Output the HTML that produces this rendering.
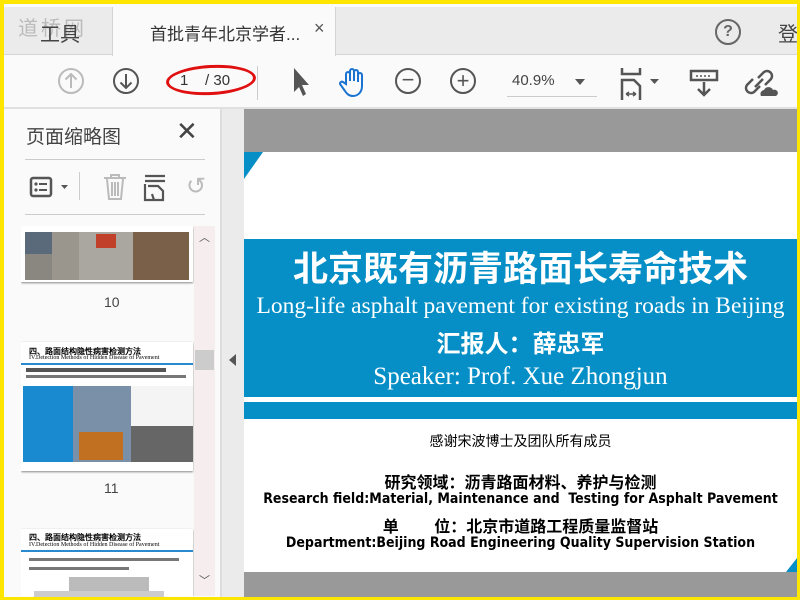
<!DOCTYPE html>
<html><head><meta charset="utf-8"><style>
*{margin:0;padding:0;box-sizing:border-box}
body{width:800px;height:600px;overflow:hidden;background:#ffe600;position:relative;font-family:"Liberation Sans","Noto Sans CJK SC",sans-serif}
.a{position:absolute}
.cn{font-family:"Liberation Sans","Noto Sans CJK SC",sans-serif}
.serif{font-family:"Liberation Serif","Noto Serif CJK SC",serif}
</style></head><body>
<div class="a" style="left:4px;top:4px;width:793px;height:593px;background:#fafafa;overflow:hidden">
 <div class="a" style="left:0;top:3px;width:793px;height:48px;background:#ebebeb;border-bottom:1px solid #d4d4d4"></div>
 <div class="a" style="left:108px;top:3px;width:224px;height:49px;background:#fafafa;border-left:1px solid #d4d4d4;border-right:1px solid #d4d4d4"></div>
 <div class="a" style="left:14px;top:8px;font-size:20px;color:#bbb;letter-spacing:3px">道桥网</div>
 <div class="a" style="left:36px;top:14px;font-size:20px;color:#444">工具</div>
 <div class="a" style="left:146px;top:16px;font-size:17px;color:#333">首批青年北京学者...</div>
 <div class="a" style="left:310px;top:14px;font-size:18px;color:#555">×</div>
 <div class="a" style="left:711px;top:15px;width:26px;height:26px;border:2px solid #666;border-radius:50%;text-align:center;font-size:16px;line-height:22px;color:#666;font-weight:bold">?</div>
 <div class="a" style="left:774px;top:14px;font-size:20px;color:#444">登</div>
 <div class="a" style="left:0;top:103px;width:793px;height:2px;background:#e0e0e0"></div>
 <svg class="a" style="left:54px;top:64px" width="28" height="28"><circle cx="13" cy="13" r="12" fill="none" stroke="#bbb" stroke-width="2"/><path d="M13 20V6M7.5 11.5L13 6l5.5 5.5" fill="none" stroke="#bbb" stroke-width="2"/></svg>
 <svg class="a" style="left:109px;top:64px" width="28" height="28"><circle cx="13" cy="13" r="12" fill="none" stroke="#555" stroke-width="2"/><path d="M13 6v14M7.5 14.5L13 20l5.5-5.5" fill="none" stroke="#555" stroke-width="2"/></svg>
 <div class="a" style="left:162px;top:61px;width:90px;height:30px;border:3px solid #e01010;border-radius:50%;transform:rotate(-3deg)"></div>
 <div class="a" style="left:176px;top:68px;font-size:15px;color:#333">1&nbsp;&nbsp;&nbsp;&nbsp;/ 30</div>
 <div class="a" style="left:253px;top:62px;width:1px;height:34px;background:#ccc"></div>
 <svg class="a" style="left:284px;top:62px" width="24" height="32"><path d="M6 2 L6 26 L11 21 L15 30 L18 28 L14 19 L21 19 Z" fill="#555"/></svg>
 <svg class="a" style="left:334px;top:62px" width="32" height="32"><path d="M8 18 V8 a2 2 0 0 1 4 0 V15 V5 a2 2 0 0 1 4 0 V15 V6 a2 2 0 0 1 4 0 V16 V9 a2 2 0 0 1 4 0 V20 c0 6 -4 10 -9 10 c-4 0 -6 -2 -8 -5 l-5 -7 a2 2 0 0 1 3 -2 Z" fill="none" stroke="#1a73d0" stroke-width="2"/></svg>
 <div class="a" style="left:391px;top:64px;width:26px;height:26px;border:2px solid #555;border-radius:50%;text-align:center;font-size:22px;line-height:20px;color:#555">−</div>
 <div class="a" style="left:446px;top:64px;width:26px;height:26px;border:2px solid #555;border-radius:50%;text-align:center;font-size:22px;line-height:21px;color:#555">+</div>
 <div class="a" style="left:508px;top:68px;font-size:15px;color:#444">40.9%</div>
 <div class="a" style="left:571px;top:75px;border:5px solid transparent;border-top:6px solid #555"></div>
 <div class="a" style="left:503px;top:92px;width:90px;height:1px;background:#ccc"></div>
 <svg class="a" style="left:616px;top:62px" width="40" height="36"><path d="M2 2 V8 H20 V2 M2 34 V14 H14 L20 20 V34" fill="none" stroke="#555" stroke-width="2.5"/><path d="M6 28 H16 M6 28 l3 -2 M6 28 l3 2 M16 28 l-3 -2 M16 28 l-3 2" stroke="#555" stroke-width="1.5"/><path d="M30 13 h9 l-4.5 5z" fill="#555"/></svg>
 <svg class="a" style="left:685px;top:65px" width="32" height="30"><rect x="2" y="2" width="26" height="9" fill="none" stroke="#555" stroke-width="2.5"/><path d="M7 7h2M11 7h2M15 7h2M19 7h2" stroke="#555" stroke-width="1.5"/><path d="M15 13 V26 M9 20 L15 26 L21 20" fill="none" stroke="#555" stroke-width="2.5"/></svg>
 <svg class="a" style="left:740px;top:62px" width="36" height="34"><path d="M14 12 l6 -6 a5 5 0 0 1 7 7 l-6 6 M16 20 l-6 6 a5 5 0 0 1 -7 -7 l6 -6 M11 21 L19 13" fill="none" stroke="#555" stroke-width="2.5"/><path d="M17 30 a4 4 0 0 1 3 -6 a5 5 0 0 1 9 0 a3 3 0 0 1 3 6 Z" fill="#555"/></svg>
 <div class="a" style="left:216px;top:105px;width:2px;height:488px;background:#ddd"></div>
 <div class="a" style="left:218px;top:105px;width:22px;height:488px;background:#ebebeb"></div>
 <div class="a" style="left:225px;top:350px;border:6px solid transparent;border-right:7px solid #555;border-left:0"></div>
 <div class="a" style="left:22px;top:118px;font-size:19px;color:#444">页面缩略图</div>
 <div class="a" style="left:172px;top:114px;font-size:26px;color:#444;line-height:26px">✕</div>
 <div class="a" style="left:21px;top:155px;width:180px;height:1px;background:#ccc"></div>
 <svg class="a" style="left:22px;top:172px" width="46" height="26"><rect x="5" y="2" width="20" height="18" rx="2" fill="none" stroke="#555" stroke-width="2.5"/><circle cx="10" cy="8" r="1.6" fill="#555"/><circle cx="10" cy="14" r="1.6" fill="#555"/><path d="M13 8h8M13 14h8" stroke="#555" stroke-width="2"/><path d="M35 9h7l-3.5 4z" fill="#555"/></svg>
 <div class="a" style="left:75px;top:168px;width:1px;height:28px;background:#ccc"></div>
 <svg class="a" style="left:96px;top:168px" width="30" height="30"><path d="M4 6h22M11 6V3h8v3M7 7l2 20h12l2-20M12 10v14M15 10v14M18 10v14" fill="none" stroke="#bbb" stroke-width="2"/></svg>
 <svg class="a" style="left:138px;top:168px" width="26" height="30"><path d="M3 4h20M3 9h20M3 12v16h9M6 14h10l5 5v9h-9l-2-6" fill="none" stroke="#555" stroke-width="2.2"/></svg>
 <div class="a" style="left:182px;top:168px;font-size:24px;color:#bbb">↺</div>
 <div class="a" style="left:21px;top:210px;width:180px;height:1px;background:#ccc"></div>
 <div class="a" style="left:17px;top:222px;width:176px;height:370px;overflow:hidden">
  <div class="a" style="left:0;top:0;width:172px;height:56px;background:#fff;box-shadow:0 1px 2px #888">
   <div class="a" style="left:4px;top:6px;width:27px;height:22px;background:#5a6a7a"></div>
   <div class="a" style="left:4px;top:28px;width:27px;height:26px;background:#8a8680"></div>
   <div class="a" style="left:31px;top:6px;width:27px;height:48px;background:#9a968e"></div>
   <div class="a" style="left:58px;top:6px;width:54px;height:48px;background:#aaa6a0"></div>
   <div class="a" style="left:75px;top:8px;width:20px;height:14px;background:#c0402a"></div>
   <div class="a" style="left:112px;top:6px;width:56px;height:48px;background:#7a6048"></div>
  </div>
  <div class="a" style="left:83px;top:68px;font-size:14px;color:#444">10</div>
  <div class="a" style="left:0;top:116px;width:172px;height:129px;background:#fff;box-shadow:0 1px 2px #888;font-family:'Liberation Serif',serif;color:#000">
   <div class="a" style="left:8px;top:4px;font-size:8px;font-weight:bold">四、路面结构隐性病害检测方法</div>
   <div class="a" style="left:8px;top:13px;font-size:6px">IV.Detection Methods of Hidden Disease of Pavement</div>
   <div class="a" style="left:0;top:21px;width:172px;height:2px;background:#2a8ad0"></div>
   <div class="a" style="left:5px;top:26px;width:140px;height:4px;background:#555"></div>
   <div class="a" style="left:5px;top:33px;width:160px;height:3px;background:#777"></div>
   <div class="a" style="left:2px;top:44px;width:50px;height:76px;background:#1a8ad0"></div>
   <div class="a" style="left:52px;top:44px;width:58px;height:76px;background:#7a90a8"></div>
   <div class="a" style="left:58px;top:90px;width:44px;height:28px;background:#c07020"></div>
   <div class="a" style="left:110px;top:44px;width:62px;height:40px;background:#f4f4f4"></div>
   <div class="a" style="left:110px;top:84px;width:62px;height:36px;background:#666"></div>
  </div>
  <div class="a" style="left:83px;top:254px;font-size:14px;color:#444">11</div>
  <div class="a" style="left:0;top:303px;width:172px;height:70px;background:#fff;box-shadow:0 1px 2px #888;font-family:'Liberation Serif',serif">
   <div class="a" style="left:8px;top:3px;font-size:8px;font-weight:bold">四、路面结构隐性病害检测方法</div>
   <div class="a" style="left:8px;top:13px;font-size:6px">IV.Detection Methods of Hidden Disease of Pavement</div>
   <div class="a" style="left:0;top:21px;width:172px;height:2px;background:#2a8ad0"></div>
   <div class="a" style="left:8px;top:29px;width:150px;height:3px;background:#777"></div>
   <div class="a" style="left:8px;top:38px;width:100px;height:3px;background:#777"></div>
   <div class="a" style="left:48px;top:48px;width:80px;height:14px;background:#bbb"></div>
  </div>
 </div>
 <div class="a" style="left:190px;top:222px;width:21px;height:370px;background:#f6eeee"></div>
 <div class="a" style="left:195px;top:225px;font-size:11px;color:#555">︿</div>
 <div class="a" style="left:191px;top:346px;width:19px;height:20px;background:#ccc"></div>
 <div class="a" style="left:195px;top:568px;font-size:11px;color:#555">﹀</div>
 <div class="a" style="left:30px;top:587px;width:130px;height:6px;background:#ccc"></div>
 <div class="a" style="left:240px;top:105px;width:553px;height:488px;background:#999"></div>
 <div class="a" style="left:240px;top:148px;width:553px;height:420px;background:#fff;overflow:hidden">
  <div class="a" style="left:0;top:0;border-top:27px solid #058fc6;border-right:19px solid transparent"></div>
  <div class="a" style="left:0;top:87px;width:553px;height:158px;background:#058fc6"></div>
  <div class="a" style="left:0;top:250px;width:553px;height:17px;background:#058fc6"></div>
  <div class="a cn" style="left:0;top:96px;width:553px;text-align:center;font-size:35px;font-weight:bold;color:#fff;line-height:44px">北京既有沥青路面长寿命技术</div>
  <div class="a serif" style="left:0;top:141px;width:553px;text-align:center;font-size:23.5px;color:#fff;line-height:26px;white-space:nowrap">Long-life asphalt pavement for existing roads in Beijing</div>
  <div class="a cn" style="left:0;top:177px;width:553px;text-align:center;font-size:24px;font-weight:bold;color:#fff;line-height:32px">汇报人：薛忠军</div>
  <div class="a serif" style="left:0;top:212px;width:553px;text-align:center;font-size:25px;color:#fff;line-height:26px">Speaker: Prof. Xue Zhongjun</div>
  <div class="a cn" style="left:0;top:279px;width:553px;text-align:center;font-size:14px;color:#000">感谢宋波博士及团队所有成员</div>
  <div class="a cn" style="left:0;top:317px;width:553px;text-align:center;font-size:16px;font-weight:bold;color:#000">研究领域：沥青路面材料、养护与检测</div>
  <div class="a" style="left:0;top:339px;width:553px;text-align:center;font-size:14px;font-weight:bold;color:#000;font-family:'DejaVu Sans Condensed','Liberation Sans',sans-serif;white-space:nowrap">Research field:Material, Maintenance and&nbsp; Testing for Asphalt Pavement</div>
  <div class="a cn" style="left:0;top:361px;width:553px;text-align:center;font-size:16px;font-weight:bold;color:#000">单&nbsp;&nbsp;&nbsp;&nbsp;&nbsp;&nbsp;&nbsp;&nbsp;位：北京市道路工程质量监督站</div>
  <div class="a" style="left:0;top:383px;width:553px;text-align:center;font-size:14px;font-weight:bold;color:#000;font-family:'DejaVu Sans Condensed','Liberation Sans',sans-serif;white-space:nowrap">Department:Beijing Road Engineering Quality Supervision Station</div>
  <div class="a" style="right:0;bottom:0;border-bottom:14px solid #058fc6;border-left:11px solid transparent"></div>
 </div>
</div>
</body></html>
